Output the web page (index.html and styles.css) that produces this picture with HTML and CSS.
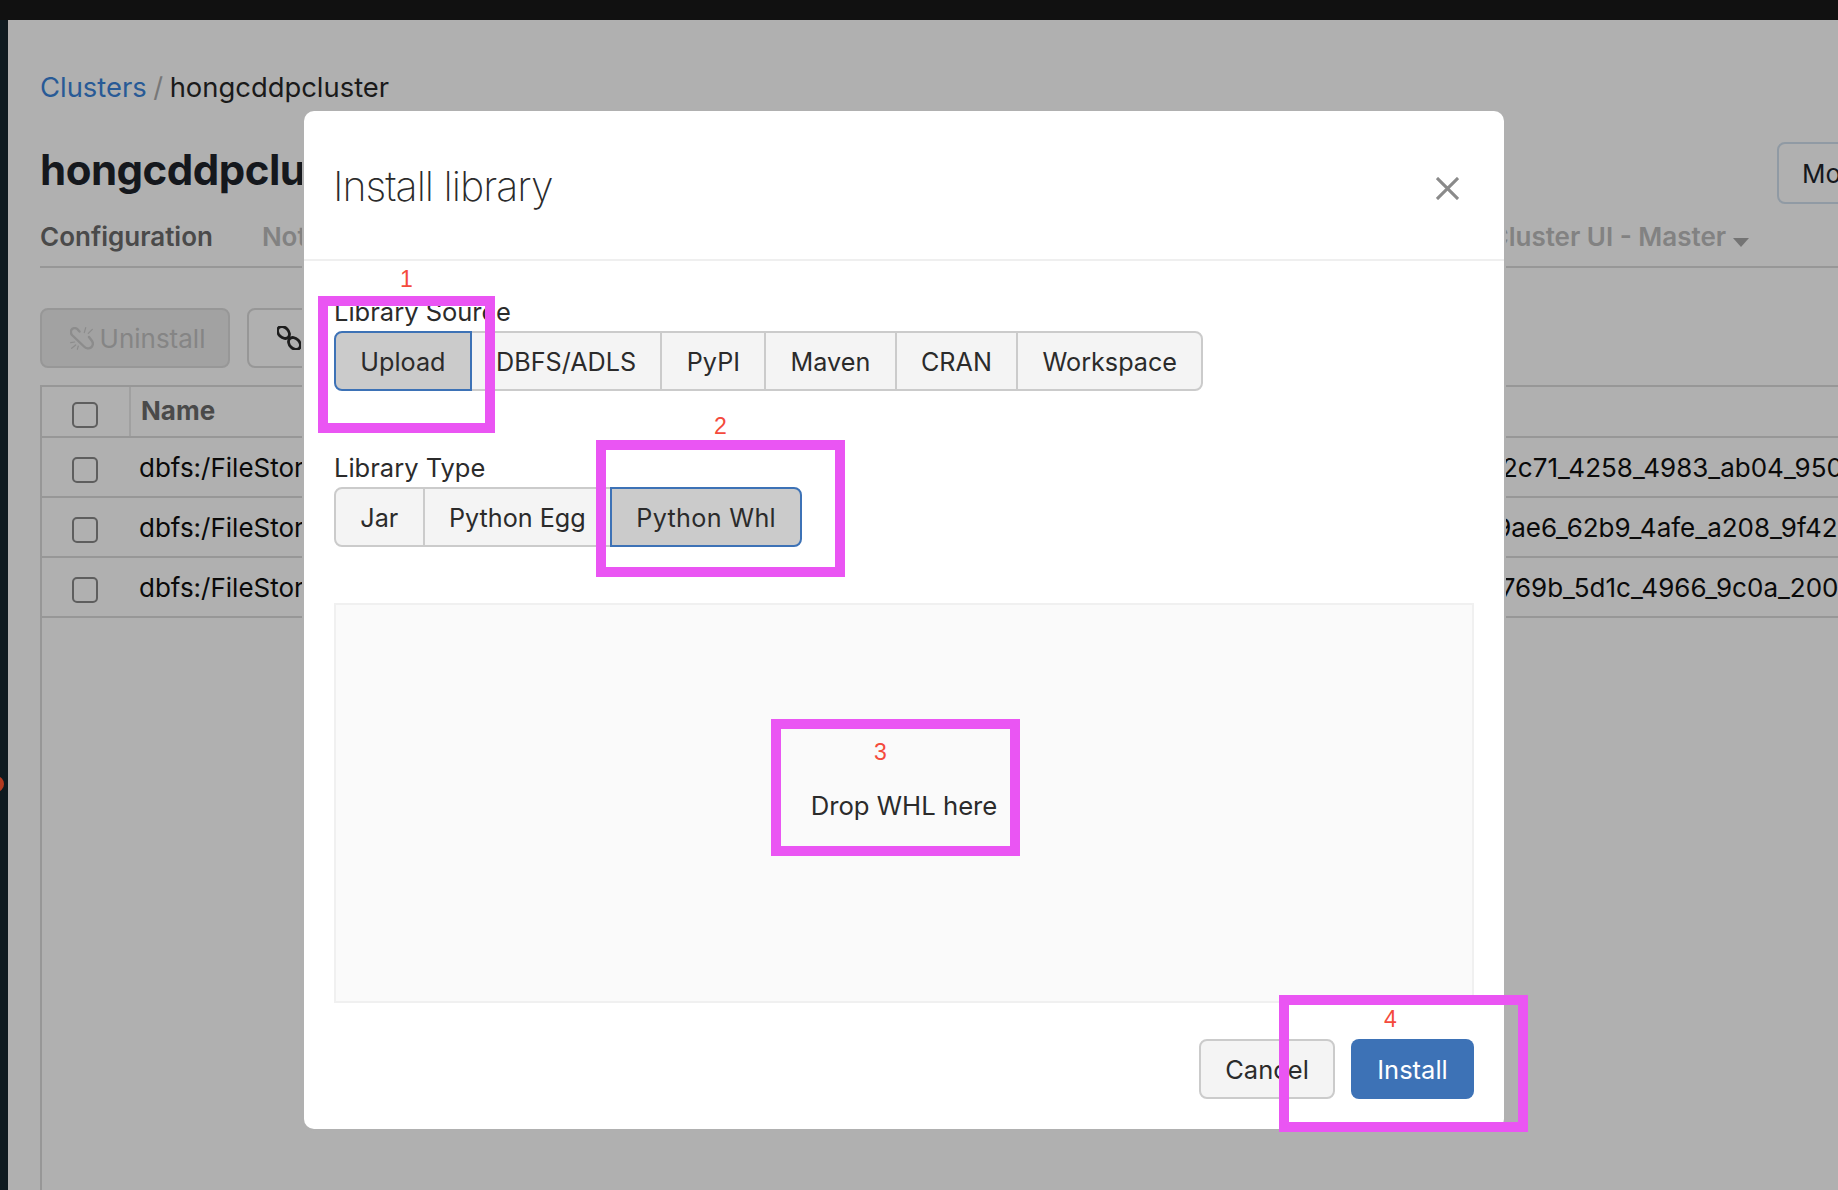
FILE: index.html
```html
<!DOCTYPE html>
<html lang="en">
<head>
    <meta charset="UTF-8">
    <meta name="viewport" content="width=device-width, initial-scale=1.0">
    <title>Install library</title>
    <link rel="stylesheet" href="styles.css">
</head>
<body>
    <div class="topbar"></div>
    <div class="layout">
        <div class="sidebar"><span class="sidebar-dot"></span></div>
        <main class="page">
            <div class="crumbs"><a class="crumb-link">Clusters</a> <span class="crumb-sep">/</span> hongcddpcluster</div>
            <div class="head">
                <h1 class="cluster-name">hongcddpcluster</h1>
                <button class="more-btn">More</button>
            </div>
            <nav class="tabs">
                <span class="tab tab-active">Configuration</span>
                <span class="tab">Notebooks</span>
                <span class="tab">Libraries</span>
                <span class="tab">Event Logs</span>
                <span class="tab">Spark UI</span>
                <span class="tab">Driver Logs</span>
                <span class="tab">Metrics</span>
                <span class="tab">Apps</span>
                <span class="tab">Spark Cluster UI - Master <i class="caret"></i></span>
            </nav>
            <div class="toolbar">
                <button class="tool-btn uninstall-btn">
                    <svg class="tool-icon" viewBox="0 0 24 24" fill="none" stroke="#8c8c8c" stroke-width="2.400" stroke-linecap="round" stroke-linejoin="round">
                        <path d="M9.500 4.500 7.500 2.200C5.500.5 2.500.8 1.300 3 .4 5 1 7 2.500 8.500L14 19.500c2 2 5 2.500 7 1 2-1.500 2.500-4.500 1-6.500L19 10"/>
                        <path d="M15.700.7 14.300 5.700M22.300 2.300 18.300 6.300M.7 15.700 4.700 15M1.700 21.300 5.700 18M7.300 22.300 8.300 19" stroke-width="1.200"/>
                    </svg>
                    Uninstall
                </button>
                <button class="tool-btn link-btn">
                    <svg class="tool-icon" viewBox="0 0 24 24" fill="none" stroke="#1d1d1d" stroke-width="2.800">
                        <ellipse cx="6.500" cy="6.500" rx="6.800" ry="5" transform="rotate(45 6.500 6.500)"/>
                        <ellipse cx="17.500" cy="17.500" rx="6.800" ry="5" transform="rotate(45 17.500 17.500)"/>
                    </svg>
                </button>
            </div>
            <div class="table">
                <div class="table-row table-head">
                    <div class="check-cell"><span class="check"></span></div>
                    <div class="name-head">Name</div>
                </div>
                <div class="table-row">
                    <div class="check-cell"><span class="check"></span></div>
                    <div class="name-cell">dbfs:/FileStore/jars/maven/packages/shared/wheels/release/cddp_dist/dd1a07_ef41a1b0_8d1e_4f62_b7a5_3ce92c71_4258_4983_ab04_950d7f3</div>
                </div>
                <div class="table-row">
                    <div class="check-cell"><span class="check"></span></div>
                    <div class="name-cell">dbfs:/FileStore/jars/maven/packages/shared/wheels/release/cddp_dist/4be9_a83c07d4_2fb6_46de_91c3_7be19ae6_62b9_4afe_a208_9f42d10</div>
                </div>
                <div class="table-row">
                    <div class="check-cell"><span class="check"></span></div>
                    <div class="name-cell">dbfs:/FileStore/jars/maven/packages/shared/wheels/release/cddp_dist/07c3e_c5d92e16_7ab4_48f0_86d2_15f0769b_5d1c_4966_9c0a_2006ae1</div>
                </div>
            </div>
        </main>
    </div>

    <section class="modal">
        <header class="modal-head">
            <h2 class="modal-title">Install library</h2>
            <svg class="modal-close" viewBox="0 0 24 24" fill="none" stroke="#8a8a8a" stroke-width="3.200">
                <path d="M1 1 23 23M23 1 1 23"/>
            </svg>
        </header>
        <div class="modal-body">
            <div class="field field-source">
                <label class="field-label">Library Source</label>
                <div class="btn-group">
                    <button class="seg seg-active">Upload</button>
                    <button class="seg">DBFS/ADLS</button>
                    <button class="seg">PyPI</button>
                    <button class="seg">Maven</button>
                    <button class="seg">CRAN</button>
                    <button class="seg">Workspace</button>
                </div>
            </div>
            <div class="field field-type">
                <label class="field-label">Library Type</label>
                <div class="btn-group">
                    <button class="seg">Jar</button>
                    <button class="seg">Python Egg</button>
                    <button class="seg seg-active">Python Whl</button>
                </div>
            </div>
            <div class="dropzone">Drop WHL here</div>
        </div>
        <footer class="modal-foot">
            <button class="foot-btn cancel-btn">Cancel</button>
            <button class="foot-btn install-btn">Install</button>
        </footer>
    </section>

    <!-- annotations drawn on top of the screenshot -->
    <div class="mark mark-1"><span class="mark-num">1</span></div>
    <div class="mark mark-2"><span class="mark-num">2</span></div>
    <div class="mark mark-3"><span class="mark-num">3</span></div>
    <div class="mark mark-4"><span class="mark-num">4</span></div>
</body>
</html>
```

FILE: styles.css
```css
* {
    box-sizing: border-box;
}

html,
body {
    height: 100%;
}

body {
    margin: 0;
    position: relative;
    overflow: hidden;
    background-color: #b0b0b0;
    font-family: Inter, "Liberation Sans", sans-serif;
    font-size: 25.5px;
    color: #111;
}

button {
    font-family: inherit;
    font-size: inherit;
    padding-top: 2px;
    cursor: pointer;
}

.topbar {
    height: 20px;
    background-color: #111;
}

.layout {
    display: flex;
    height: 1170px;
}

.sidebar {
    position: relative;
    flex: 0 0 8px;
    background-color: #0e1a20;
}

.sidebar-dot {
    position: absolute;
    left: -12px;
    top: 756px;
    width: 16px;
    height: 16px;
    border-radius: 50%;
    background-color: #b23a20;
}

.page {
    flex: 1;
    min-width: 0;
    padding-left: 32px;
    display: flex;
    flex-direction: column;
    overflow: hidden;
}

/* breadcrumb and title */
.crumbs {
    margin-top: 48px;
    height: 38px;
    line-height: 38px;
    font-size: 27.400px;
    word-spacing: -1.200px;
    color: #1a1a1a;
}

.crumb-link {
    color: #285a96;
}

.crumb-sep {
    color: #777;
}

.head {
    display: flex;
    align-items: center;
    justify-content: space-between;
    margin-top: 36px;
    height: 62px;
}

.cluster-name {
    margin: -7px 0 0;
    font-size: 42px;
    font-weight: 700;
    letter-spacing: -0.5px;
    color: #15181d;
}

.more-btn {
    flex: 0 0 120px;
    height: 62px;
    margin-right: -59px;
    padding: 0 0 0 23px;
    text-align: left;
    font-size: 26px;
    background: none;
    border: 2px solid #909aa4;
    border-radius: 8px;
    color: #15181d;
}

/* tabs */
.tabs {
    display: flex;
    gap: 49px;
    height: 64px;
    padding-top: 15px;
    border-bottom: 2px solid #979797;
    font-size: 26px;
    font-weight: 600;
    white-space: nowrap;
    color: #828282;
}

.tab {
    line-height: 36px;
}

.tab:last-child {
    margin-left: 7px;
}

.tab-active {
    color: #4a4a4a;
}

.caret {
    display: inline-block;
    vertical-align: -1px;
    border-style: solid;
    border-width: 9px 8px 0;
    border-color: #747474 transparent transparent;
}

/* toolbar */
.toolbar {
    display: flex;
    gap: 17px;
    margin-top: 40px;
}

.tool-btn {
    display: flex;
    align-items: center;
    justify-content: center;
    height: 60px;
    background: none;
    border: 2px solid #979797;
    border-radius: 8px;
}

.uninstall-btn {
    width: 190px;
    gap: 6px;
    padding-left: 11px;
    font-size: 26px;
    background-color: #a2a2a2;
    color: #858585;
}

.link-btn {
    width: 120px;
    justify-content: flex-start;
    padding: 0 0 0 28px;
}

.tool-icon {
    width: 24px;
    height: 24px;
}

/* library table */
.table {
    flex: 1;
    margin-top: 17px;
    border-top: 2px solid #979797;
    border-left: 2px solid #979797;
    font-size: 26px;
}

.table-row {
    display: flex;
    align-items: center;
    height: 60px;
    border-bottom: 2px solid #979797;
    white-space: nowrap;
    overflow: hidden;
}

.table-head {
    height: 51px;
}

.check-cell {
    display: flex;
    flex: 0 0 89px;
    height: 100%;
    align-items: center;
    padding: 6px 0 0 30px;
}

.table-head .check-cell {
    border-right: 2px solid #a0a0a0;
}

.check {
    width: 26px;
    height: 26px;
    border: 2px solid #5e5e5e;
    border-radius: 5px;
}

.name-head {
    padding: 0 0 2px 10px;
    font-weight: 700;
    color: #4a4a4a;
}

.name-cell {
    padding-left: 8px;
    color: #0a0a0a;
}

/* modal */
.modal {
    position: absolute;
    left: 304px;
    top: 111px;
    width: 1200px;
    height: 1018px;
    display: flex;
    flex-direction: column;
    background-color: #fff;
    border-radius: 10px;
    box-shadow: 0 0 0 2px #b0b0b0;
    color: #2b2b2b;
}

.modal-head {
    display: flex;
    align-items: center;
    justify-content: space-between;
    flex: 0 0 150px;
    padding: 0 30px;
    border-bottom: 2px solid #efefef;
}

.modal-title {
    margin: 2px 0 0 -1px;
    font-size: 41px;
    font-weight: 200;
    letter-spacing: -1px;
}

.modal-close {
    width: 23px;
    height: 23px;
    margin: 7px 15px 0 0;
}

.modal-body {
    flex: 1;
    padding: 0 30px;
}

.field-source {
    margin-top: 34px;
}

.field-type {
    margin-top: 60px;
}

.field-label {
    display: block;
    height: 36px;
    line-height: 34px;
}

.btn-group {
    display: flex;
}

.seg {
    height: 60px;
    padding: 1px 24.300px 0;
    margin-left: -2px;
    font-size: 25.200px;
    background-color: #f4f4f4;
    border: 2px solid #cbcbcb;
    color: #2b2b2b;
}

.seg:first-child {
    margin-left: 0;
    border-radius: 8px 0 0 8px;
}

.seg:last-child {
    border-radius: 0 8px 8px 0;
}

.seg-active {
    position: relative;
    background-color: #cbcbcb;
    border-color: #3d72b6;
}

.field-type .seg-active {
    letter-spacing: 0.3px;
}

.dropzone {
    display: flex;
    align-items: center;
    justify-content: center;
    height: 400px;
    margin-top: 56px;
    background-color: #fafafa;
    border: 2px solid #f0f0f0;
    font-size: 25.700px;
    color: #2b2b2b;
    padding-top: 5px;
}

.modal-foot {
    display: flex;
    justify-content: flex-end;
    gap: 16px;
    padding: 0 30px 30px;
}

.foot-btn {
    height: 60px;
    border-radius: 8px;
}

.cancel-btn {
    width: 136px;
    background-color: #f4f4f4;
    border: 2px solid #cbcbcb;
    color: #2b2b2b;
}

.install-btn {
    width: 123px;
    background-color: #3d72b6;
    border: none;
    color: #fff;
}

/* magenta callouts */
.mark {
    position: absolute;
    border: 10px solid #ea55f3;
    width: 249px;
    height: 137px;
}

.mark-num {
    position: absolute;
    font-family: "Liberation Sans", sans-serif;
    font-size: 23px;
    line-height: 26px;
    color: #f44a3c;
}

.mark-1 {
    left: 318px;
    top: 296px;
    width: 177px;
}

.mark-1 .mark-num {
    left: 72px;
    top: -40px;
}

.mark-2 {
    left: 596px;
    top: 440px;
}

.mark-2 .mark-num {
    left: 108px;
    top: -37px;
}

.mark-3 {
    left: 771px;
    top: 719px;
}

.mark-3 .mark-num {
    left: 93px;
    top: 10px;
}

.mark-4 {
    left: 1279px;
    top: 995px;
}

.mark-4 .mark-num {
    left: 95px;
    top: 1px;
}
```
